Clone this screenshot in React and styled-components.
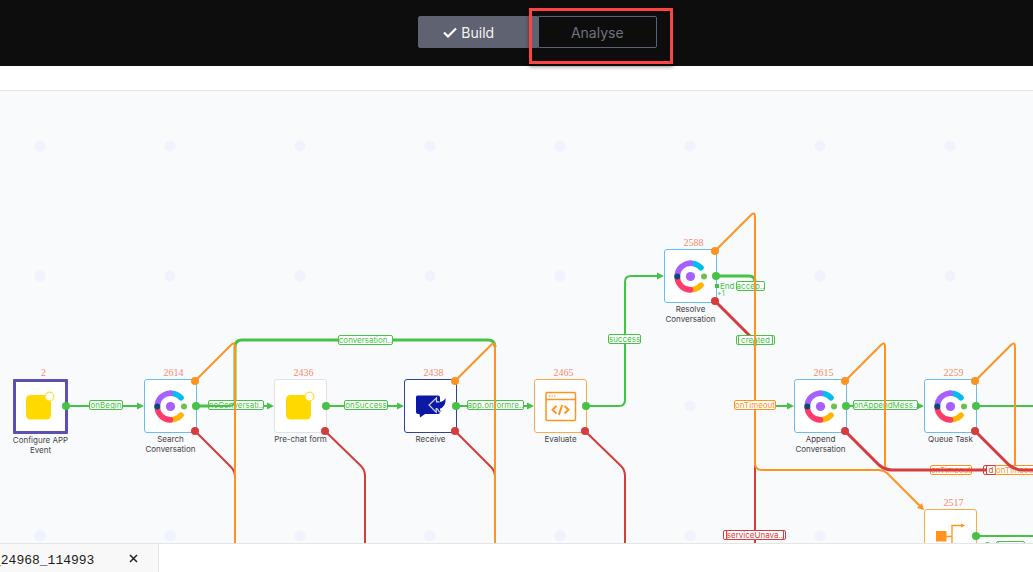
import React from "react";
import styled, { createGlobalStyle } from "styled-components";

const GREEN = "#46c246";
const ORANGE = "#ff931e";
const RED = "#d63c3c";

const GlobalStyle = createGlobalStyle`
  * { box-sizing: border-box; }
  body { margin: 0; background: #fff; font-family: Inter, "Liberation Sans", sans-serif; }
`;

const Page = styled.div`
  display: flex;
  flex-direction: column;
  height: 100vh;
  overflow: hidden;
`;

const Header = styled.header`
  display: flex;
  align-items: flex-start;
  justify-content: center;
  flex: none;
  height: 66px;
  padding: 16px 0 0 42px;
  background: #0d0d0d;
`;

const ModeSwitch = styled.div`
  position: relative;
  display: grid;
  grid-template-columns: 1fr 1fr;
  width: 239px;
`;

const ModeButton = styled.button`
  display: flex;
  align-items: center;
  justify-content: center;
  gap: 4px;
  height: 32px;
  padding: 0 ${(p) => (p.$active ? "18px" : "0")} 0 0;
  border: 1px solid #5f6270;
  border-radius: ${(p) => (p.$active ? "2px 0 0 2px" : "0 2px 2px 0")};
  background: ${(p) => (p.$active ? "#5f6270" : "transparent")};
  color: ${(p) => (p.$active ? "#f4f4f4" : "#6f7280")};
  font: 14px Inter, "Liberation Sans", sans-serif;
`;

const Highlight = styled.div`
  position: absolute;
  z-index: 5;
  top: -8px;
  left: 111px;
  width: 144px;
  height: 56px;
  border: 3px solid #ff4242;
  box-shadow: 0 3px 4px rgba(0, 0, 0, 0.4);
  pointer-events: none;
`;

const SubBar = styled.div`
  flex: none;
  height: 25px;
  border-bottom: 1px solid #e4e5e6;
`;

const Canvas = styled.main`
  position: relative;
  flex: 1;
  min-height: 0;
  overflow: hidden;
  background: #f9fafc radial-gradient(circle, #eef3fd 5px, transparent 6px) -25px -10px / 130px 130px;
`;

const Layer = styled.svg`
  position: absolute;
  top: 0;
  left: 0;
  width: 100%;
  height: 100%;
  fill: none;
  stroke-width: 2;
`;

const NodeWrap = styled.div`
  position: absolute;
  left: ${(p) => p.$x}px;
  top: ${(p) => p.$y}px;
  display: flex;
  flex-direction: column;
  align-items: center;
  width: 53px;
`;

const NodeCount = styled.span`
  height: 13px;
  padding-left: 6px;
  color: #f58a6c;
  font: 10px/13px "Liberation Serif", serif;
`;

const NodeCard = styled.div`
  display: flex;
  align-items: center;
  justify-content: center;
  flex: none;
  width: ${(p) => (p.$selected ? 55 : 53)}px;
  height: ${(p) => (p.$selected ? 55 : 54)}px;
  border: ${(p) => (p.$selected ? 3 : 1)}px solid ${(p) => p.$color};
  border-radius: ${(p) => (p.$selected ? 1 : 3)}px;
  background: #fff;
`;

const NodeName = styled.span`
  width: 64px;
  padding-top: 1px;
  color: #3f4245;
  font-size: 8px;
  line-height: 10px;
  text-align: center;
`;

const EdgeLabel = styled.span`
  position: absolute;
  left: ${(p) => p.$x}px;
  top: ${(p) => p.$y}px;
  display: flex;
  align-items: center;
  justify-content: center;
  width: ${(p) => p.$w}px;
  height: 10px;
  border: 1px solid ${(p) => p.$color};
  border-radius: 2px;
  background: #fff;
  color: ${(p) => p.$color};
  font-size: 8px;
  line-height: 8px;
  white-space: nowrap;
`;

const Ending = styled.span`
  position: absolute;
  left: ${(p) => p.$x}px;
  top: ${(p) => p.$y}px;
  display: grid;
  grid-template-columns: 4px auto;
  align-items: center;
  column-gap: 1px;
  color: ${GREEN};
  font-size: 8px;
  line-height: 8px;

  &::before {
    content: "";
    width: 4px;
    height: 4px;
    background: ${GREEN};
  }
`;

const EndingCount = styled.small`
  grid-column: 1 / -1;
  padding-left: 2px;
  font-size: 7px;
`;

const Footer = styled.footer`
  display: flex;
  flex: none;
  height: 29px;
  border-top: 1px solid #e4e5e6;
  background: #fff;
`;

const FileTab = styled.div`
  display: flex;
  align-items: center;
  justify-content: space-between;
  width: 159px;
  padding: 6px 18px 0 0;
  border-right: 1px solid #e4e5e6;
  background: #f8f8f8;
  overflow: hidden;
`;

const FileName = styled.span`
  margin-left: -7px;
  color: #1c1c1c;
  font: 13px/20px "Liberation Mono", monospace;
`;

const CloseButton = styled.button`
  display: flex;
  padding: 0 2px 6px;
  border: 0;
  background: none;
`;

function ConversationIcon() {
  return (
    <svg width="35" height="35" viewBox="0 0 35 35" fill="none" strokeWidth="5.6" aria-hidden="true">
      <path d="M17.5 4.2Q23.5 4.2 28 8.8" stroke="#00bdf0" strokeLinecap="round" />
      <path d="M17.5 30.8Q23.5 30.8 28 26.2" stroke="#ffb400" strokeLinecap="round" />
      <path d="M4.2 17.5A13.3 13.3 0 0 1 17.5 4.2" stroke="#a560ff" />
      <path d="M4.2 17.5A13.3 13.3 0 0 0 17.5 30.8" stroke="#ff3b6b" />
      <circle cx="17.5" cy="4.2" r="2.8" fill="#a560ff" />
      <circle cx="17.5" cy="30.8" r="2.8" fill="#ff3b6b" />
      <circle cx="4.3" cy="17.5" r="3" fill="#0a4a78" />
      <circle cx="17.5" cy="17.5" r="4.6" fill="#a560ff" />
      <circle cx="31" cy="17.5" r="3" fill="#6cc04a" />
    </svg>
  );
}

function FormIcon() {
  return (
    <svg width="35" height="35" viewBox="0 0 35 35" aria-hidden="true">
      <rect x="3" y="6" width="25" height="24.5" rx="4.5" fill="#ffd900" />
      <circle cx="26.5" cy="7.500" r="4.3" fill="#fff" stroke="#ffe04a" strokeWidth="1.3" />
    </svg>
  );
}

function ReceiveIcon() {
  return (
    <svg width="35" height="35" viewBox="0 0 35 35" aria-hidden="true">
      <path d="M4.5 6.5H25q2 0 2 2V23q0 2-2 2H12L7 28.500 6.500 25H5q-2 0-2-2V8Q3 6.500 4.500 6.500Z" fill="#0b19a5" />
      <path d="M16 16 23.500 8.500v4.200Q30 14 32.500 9 33.500 18 26 20l2.500 2.700h-4.300L16 16Z" fill="#0b19a5" />
      <path d="M26.500 12.800H23.500V8.800L16 16l7.200 7.300v-3.600q1.800 0 2 1.500.3 2 2.700 1.600" fill="none" stroke="#d5d9f5" strokeWidth="1.200" />
    </svg>
  );
}

function CodeIcon() {
  return (
    <svg width="35" height="35" viewBox="0 0 35 35" fill="none" stroke={ORANGE} strokeWidth="1.500" aria-hidden="true">
      <rect x="3" y="3.500" width="29.500" height="28" rx="1.500" />
      <path d="M3 10.500h29.500" />
      <path d="M6 7h7" strokeDasharray="1.500 1" strokeWidth="1.200" />
      <path d="m13.500 17-4 3.800 4 3.800m8-7.600 4 3.800-4 3.800m-2.300-8.600-3.400 9.800" strokeWidth="2" />
    </svg>
  );
}

function BranchIcon() {
  return (
    <svg width="35" height="35" viewBox="0 0 35 35" aria-hidden="true">
      <rect x="3" y="12" width="10.500" height="10.500" fill={ORANGE} />
      <path d="M13 17.500h6M31 6.500H19v22h12" fill="none" stroke={ORANGE} strokeWidth="1.300" />
      <path d="m28 4.500 4 2-4 2ZM28 26.500l4 2-4 2Z" fill={ORANGE} />
    </svg>
  );
}

const nodes = [
  { id: "2", x: 14, y: 275, name: "Configure APP Event", color: "#5d50b3", icon: FormIcon, selected: true },
  { id: "2614", x: 144, y: 275, name: "Search Conversation", color: "#68bdf8", icon: ConversationIcon },
  { id: "2436", x: 274, y: 275, name: "Pre-chat form", color: "#e2e2e4", icon: FormIcon },
  { id: "2438", x: 404, y: 275, name: "Receive", color: "#2d4595", icon: ReceiveIcon },
  { id: "2465", x: 534, y: 275, name: "Evaluate", color: "#ffa94d", icon: CodeIcon },
  { id: "2588", x: 664, y: 145, name: "Resolve Conversation", color: "#68bdf8", icon: ConversationIcon },
  { id: "2615", x: 794, y: 275, name: "Append Conversation", color: "#68bdf8", icon: ConversationIcon },
  { id: "2259", x: 924, y: 275, name: "Queue Task", color: "#68bdf8", icon: ConversationIcon },
  { id: "2517", x: 924, y: 405, name: "", color: "#ffa94d", icon: BranchIcon },
];

const labels = [
  { text: "onBegin", x: 89, y: 309, w: 34, color: GREEN },
  { text: "noConversati..", x: 208, y: 309, w: 56, color: GREEN },
  { text: "onSuccess", x: 344, y: 309, w: 44, color: GREEN },
  { text: "conversation..", x: 338, y: 244, w: 55, color: GREEN },
  { text: "app.onformre..", x: 467, y: 309, w: 57, color: GREEN },
  { text: "success", x: 608, y: 243, w: 33, color: GREEN },
  { text: "accep..", x: 736, y: 190, w: 29, color: GREEN },
  { text: "", x: 736, y: 244, w: 39, color: GREEN },
  { text: "created", x: 738, y: 244, w: 35, color: GREEN },
  { text: "onTimeout", x: 734, y: 309, w: 42, color: ORANGE },
  { text: "onAppendMess..", x: 853, y: 309, w: 65, color: GREEN },
  { text: "onTimeout", x: 930, y: 374, w: 42, color: ORANGE },
  { text: "", x: 983, y: 374, w: 14, color: RED },
  { text: "d", x: 986, y: 374, w: 10, color: RED },
  { text: "onTimeout", x: 995, y: 374, w: 42, color: ORANGE },
  { text: "", x: 723, y: 439, w: 63, color: RED },
  { text: "serviceUnava..", x: 726, y: 439, w: 58, color: RED },
  { text: "accep..", x: 996, y: 450, w: 29, color: GREEN },
];

const ports = [
  [66, 315, GREEN], [196, 315, GREEN], [326, 315, GREEN], [456, 315, GREEN], [586, 315, GREEN],
  [716, 185, GREEN], [846, 315, GREEN], [976, 315, GREEN], [976, 445, GREEN],
  [195, 290, ORANGE], [455, 290, ORANGE], [715, 160, ORANGE], [845, 290, ORANGE], [975, 290, ORANGE],
  [195, 340, RED], [325, 340, RED], [455, 340, RED], [585, 340, RED], [715, 210, RED], [845, 340, RED], [975, 340, RED],
];

const arrows = [[144, 315], [274, 315], [404, 315], [534, 315], [664, 185], [794, 315], [924, 315]];

function App() {
  return (
    <Page>
      <GlobalStyle />
      <Header>
        <ModeSwitch>
          <ModeButton type="button" $active>
            <svg width="14" height="11" viewBox="0 0 14 11" fill="none" stroke="#fff" strokeWidth="2.200" aria-hidden="true">
              <path d="m1 5.500 4 4L13 1.500" />
            </svg>
            Build
          </ModeButton>
          <ModeButton type="button">Analyse</ModeButton>
          <Highlight />
        </ModeSwitch>
      </Header>
      <SubBar />
      <Canvas>
        <Layer aria-hidden="true">
          <g stroke={RED}>
            <path d="M195 340 231 376Q235 380 235 386" />
            <path d="M325 340 361 375Q365 379 365 385V1200" />
            <path d="M455 340 491 376Q495 380 495 386" />
            <path d="M585 340 621 375Q625 379 625 385V1200" />
            <path d="M715 210 751 246" strokeWidth="3" />
            <path d="M755 374V1200" />
          </g>
          <g stroke={GREEN}>
            <path d="M66 315H138M196 315H268M326 315H398M456 315H528M846 315H918M776 315H788" />
            <path d="M976 315H2400M976 445H2400" />
            <path d="M586 315H619Q625 315 625 309V191Q625 185 631 185H658" />
            <path d="M196 315H229Q235 315 235 309V256Q235 249 242 249H488Q495 249 495 256" strokeWidth="3" />
          </g>
          <path d="M755 245V372Q755 379 762 379H878Q884 379 888 383L920 415" stroke={ORANGE} />
        </Layer>

        {nodes.map(({ id, x, y, name, color, icon: Icon, selected }) => (
          <NodeWrap key={id} $x={x} $y={y}>
            <NodeCount>{id}</NodeCount>
            <NodeCard $color={color} $selected={selected}>
              <Icon />
            </NodeCard>
            <NodeName>{name}</NodeName>
          </NodeWrap>
        ))}

        {labels.map((l, i) => (
          <EdgeLabel key={i} $x={l.x} $y={l.y} $w={l.w} $color={l.color}>
            {l.text}
          </EdgeLabel>
        ))}
        <Ending $x={715} $y={191}>
          End
          <EndingCount>+1</EndingCount>
        </Ending>
        <Ending $x={980} $y={450}>End</Ending>

        <Layer aria-hidden="true">
          <path d="M196 315H229Q235 315 235 309" stroke={GREEN} />
          <path d="M716 185H749Q755 185 755 191M755 249V255" stroke={GREEN} strokeWidth="3" />
          <g stroke={ORANGE}>
            <path d="M195 290 231 254Q235 250 235 256V1200" />
            <path d="M455 290 491 254Q495 250 495 256V1200" />
            <path d="M715 160 751 124Q755 120 755 126V309" />
            <path d="M845 290 881 254Q885 250 885 256V374Q885 379 891 379" />
            <path d="M975 290 1011 254Q1015 250 1015 256V374" />
          </g>
          <g stroke={RED} strokeWidth="3">
            <path d="M845 340 879 374Q885 379 892 379H987" />
            <path d="M975 340 1009 374Q1015 379 1022 379H2400" />
          </g>
          {arrows.map(([x, y]) => (
            <path key={`${x}-${y}`} d={`M${x} ${y}l-7-3.500v7Z`} fill={GREEN} />
          ))}
          <path d="m924 419-7-2 5-5Z" fill={ORANGE} />
          {ports.map(([x, y, color]) => (
            <circle key={`${x}-${y}`} cx={x} cy={y} r="4" fill={color} />
          ))}
        </Layer>
      </Canvas>
      <Footer>
        <FileTab>
          <FileName>_24968_114993</FileName>
          <CloseButton type="button" aria-label="Close tab">
            <svg width="9" height="9" viewBox="0 0 9 9" stroke="#222" strokeWidth="1.500" aria-hidden="true">
              <path d="m1 1 7 7M8 1 1 8" />
            </svg>
          </CloseButton>
        </FileTab>
      </Footer>
    </Page>
  );
}

export default App;
